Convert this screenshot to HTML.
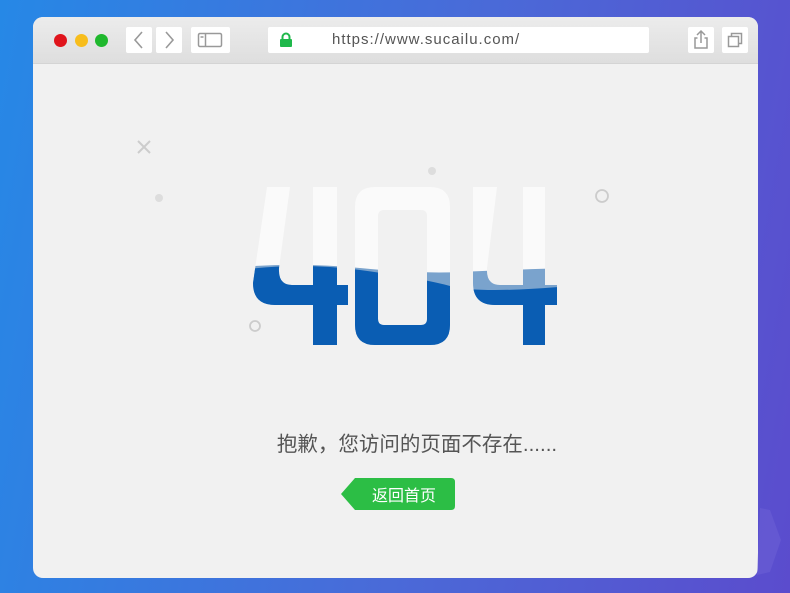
<!DOCTYPE html>
<html><head><meta charset="utf-8"><style>
*{margin:0;padding:0;box-sizing:border-box}
body{width:790px;height:593px;overflow:hidden;background:linear-gradient(100deg,#2688e6 0%,#4a6ad8 55%,#5b4ccd 100%);font-family:"Liberation Sans","Noto Sans CJK SC",sans-serif;position:relative}
.win{position:absolute;left:33px;top:17px;width:725px;height:561px;border-radius:10px;background:#f1f1f1;overflow:hidden}
.bar{position:absolute;left:0;top:0;width:725px;height:47px;background:linear-gradient(#ececec,#dedede);border-bottom:1px solid #d4d4d4}
.dot{position:absolute;top:17px;width:13px;height:13px;border-radius:50%}
.btn{position:absolute;top:10px;height:26px;background:#fff;border-radius:2px}
.url{position:absolute;left:235px;top:10px;width:381px;height:26px;background:#fff;border-radius:2px;font-size:15px;color:#555;letter-spacing:1px}
.msg{position:absolute;left:0;width:790px;top:427px;text-align:center;font-size:20.5px;color:#555;padding-left:44px}
</style></head><body>
<div class="win">
 <div class="bar">
  <div class="dot" style="left:21px;background:#e0141c"></div>
  <div class="dot" style="left:42px;background:#f7bd1c"></div>
  <div class="dot" style="left:62px;background:#1fb82d"></div>
  <div class="btn" style="left:93px;width:26px"><svg width="26" height="26"><path d="M16 5 L9 13 L16 21" stroke="#999" stroke-width="1.6" fill="none"/></svg></div>
  <div class="btn" style="left:123px;width:26px"><svg width="26" height="26"><path d="M10 5 L17 13 L10 21" stroke="#999" stroke-width="1.6" fill="none"/></svg></div>
  <div class="btn" style="left:158px;width:39px"><svg width="39" height="26"><rect x="7.5" y="6.5" width="23" height="13" rx="1.5" stroke="#999" stroke-width="1.5" fill="none"/><path d="M14.5 6.5V19.5M9.5 10h3" stroke="#999" stroke-width="1.5"/></svg></div>
  <div class="url"><svg style="position:absolute;left:11px;top:5px" width="14" height="16"><path d="M3.5 7V5a3.5 3.5 0 0 1 7 0v2" stroke="#1fb84b" stroke-width="2" fill="none"/><rect x="1" y="7" width="12" height="8" rx="1" fill="#1fb84b"/></svg><span style="position:absolute;left:64px;top:4px">https://www.sucailu.com/</span></div>
  <div class="btn" style="left:655px;width:26px"><svg width="26" height="26"><path d="M13 4v12M9 8l4-4 4 4M9.5 11H7v10h12V11h-2.5" stroke="#999" stroke-width="1.5" fill="none"/></svg></div>
  <div class="btn" style="left:689px;width:26px"><svg width="26" height="26"><rect x="6.5" y="9.5" width="10" height="10" stroke="#999" stroke-width="1.5" fill="none"/><path d="M9.5 9.5V6.5h10v10h-3" stroke="#999" stroke-width="1.5" fill="none"/></svg></div>
 </div>
</div>
<svg style="position:absolute;left:0;top:0" width="790" height="593">
 <defs>
  <clipPath id="d">
   <path d="M267 187H290L279 268Q278 285 292 285H313V187H337V285H348V305H337V345H313V305H275Q253 305 253 283Z"/>
   <path fill-rule="evenodd" d="M375 187H430Q450 187 450 207V325Q450 345 430 345H375Q355 345 355 325V207Q355 187 375 187ZM384 210Q378 210 378 216V319Q378 325 384 325H421Q427 325 427 319V216Q427 210 421 210Z"/>
   <path d="M473 187H497L487 268Q486 285 500 285H523V187H545V285H557V305H545V345H523V305H495Q473 305 473 283Z"/>
  </clipPath>
 </defs>
 <path d="M138 141L150 153M150 141L138 153" stroke="#ccc" stroke-width="2"/>
 <circle cx="159" cy="198" r="4" fill="#ddd"/><circle cx="432" cy="171" r="4" fill="#ddd"/>
 <circle cx="602" cy="196" r="6" stroke="#ccc" stroke-width="1.8" fill="none"/>
 <circle cx="255" cy="326" r="5" stroke="#ccc" stroke-width="1.8" fill="none"/>
 <g clip-path="url(#d)">
  <rect x="240" y="180" width="330" height="170" fill="#fafafa"/>
  <path d="M240 267Q300 262 360 268T460 272T570 268V350H240Z" fill="#7aa3cd"/>
  <path d="M240 270Q300 262 360 270T450 286T570 286V350H240Z" fill="#0a5db3"/>
 </g>
 <path d="M341 494L355 478H451Q455 478 455 482V506Q455 510 451 510H355Z" fill="#2cbe45"/>
 <text x="404" y="501" text-anchor="middle" font-size="16" fill="#fff" font-family="Liberation Sans,Noto Sans CJK SC,sans-serif">返回首页</text>
 <path d="M760 508L770 510L781 540L770 572L757 575Z" fill="#6b5fd6" opacity="0.6"/>
</svg>
<div class="msg">抱歉，您访问的页面不存在......</div>
</body></html>
